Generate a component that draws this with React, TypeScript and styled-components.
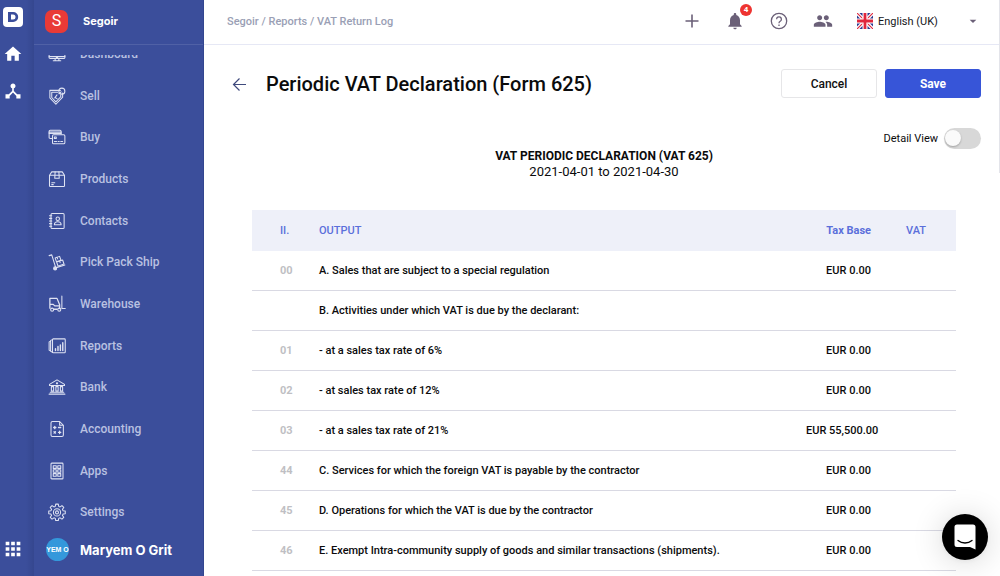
import React from "react";
import styled, { createGlobalStyle } from "styled-components";
import {
  MdApps,
  MdArrowDropDown,
  MdDeviceHub,
  MdHome,
  MdNotifications,
  MdPeople,
} from "react-icons/md";

const GlobalStyle = createGlobalStyle`
  *, *::before, *::after { box-sizing: border-box; }
  body {
    margin: 0;
    background: #fff;
    color: #0b0b0c;
    font-family: Roboto, "Liberation Sans", sans-serif;
  }
  button, select { font-family: inherit; }
  a { color: inherit; text-decoration: none; }
`;

const Shell = styled.div`
  display: flex;
  height: 100vh;
  overflow: hidden;
`;

/* Narrow product rail */
const Rail = styled.aside`
  flex: 0 0 34px;
  display: flex;
  flex-direction: column;
  align-items: center;
  gap: 17px;
  padding: 7px 8px 16px 0;
  background: linear-gradient(to right, #3b4e9b 26px, #35478f);
  color: #fff;
`;

const RailLink = styled.a<{ $last?: boolean }>`
  display: flex;
  margin-top: ${(p) => (p.$last ? "auto" : "0")};
`;

/* Main navigation */
const Sidebar = styled.aside`
  flex: 0 0 170px;
  display: flex;
  flex-direction: column;
  background: #3b4e9b;
  border-right: 1px solid #33468f;
  color: #fff;
`;

const Brand = styled.div`
  flex: 0 0 45px;
  display: flex;
  align-items: center;
  gap: 15px;
  padding: 0 11px 2px;
  border-bottom: 1px solid #5061a6;
  font: 700 11px/16px Inter, sans-serif;
`;

const BrandMark = styled.span`
  display: grid;
  place-items: center;
  width: 23px;
  height: 23px;
  border-radius: 7px;
  background: #e93a36;
  font: 400 16px/20px Roboto, sans-serif;
`;

const NavViewport = styled.nav`
  flex: 1;
  min-height: 0;
  display: flex;
  margin-top: 10px;
  overflow: hidden;
`;

const NavList = styled.ul`
  flex: 1;
  display: flex;
  flex-direction: column;
  margin: -22px 0 0;
  padding: 0;
  list-style: none;
`;

const NavItem = styled.li`
  flex: 1;
  display: flex;
`;

const NavLink = styled.a`
  display: flex;
  align-items: center;
  gap: 14px;
  padding-left: 14px;
  color: #b9c1e1;
  font-size: 12px;
  font-weight: 500;
`;

const NavGlyph = styled.svg`
  width: 18px;
  height: 18px;
  fill: none;
  stroke: #dfe3f3;
  stroke-width: 1.4;
  stroke-linecap: round;
  stroke-linejoin: round;
`;

const Profile = styled.a`
  flex: 0 0 43px;
  display: flex;
  align-items: center;
  gap: 11px;
  padding: 0 12px 10px;
  font: 700 13px/16px Inter, sans-serif;
  white-space: nowrap;
`;

const Avatar = styled.span`
  display: flex;
  justify-content: center;
  align-items: center;
  width: 23px;
  height: 23px;
  border-radius: 50%;
  overflow: hidden;
  background: #3498db;
  font: 700 7px/10px "Liberation Sans", sans-serif;
  white-space: nowrap;
`;

/* Content */
const Content = styled.div`
  flex: 1;
  min-width: 0;
  display: flex;
  flex-direction: column;
`;

const TopBar = styled.header`
  flex: 0 0 45px;
  display: flex;
  align-items: center;
  justify-content: space-between;
  padding: 0 19px 2px 23px;
  border-bottom: 1px solid #e6e8f5;
`;

const Crumbs = styled.nav`
  color: #9a9fb5;
  font-size: 11px;
  font-weight: 500;
`;

const Tools = styled.div`
  display: flex;
  align-items: center;
  gap: 24px;
  color: #6b6078;
`;

const IconButton = styled.button`
  position: relative;
  display: flex;
  padding: 0;
  border: 0;
  background: none;
  color: inherit;
  cursor: pointer;
`;

const Badge = styled.span`
  position: absolute;
  top: -7px;
  right: -7px;
  width: 12px;
  height: 12px;
  border-radius: 50%;
  background: #ee3431;
  color: #fff;
  font-size: 8px;
  font-weight: 700;
  line-height: 12px;
  text-align: center;
`;

const Language = styled.label`
  display: flex;
  align-items: center;
  gap: 5px;
`;

const LanguageSelect = styled.select`
  width: 82px;
  padding: 0;
  border: 0;
  appearance: none;
  background: none;
  color: #16161a;
  font-size: 11px;
`;

const Page = styled.main`
  flex: 1;
  min-height: 0;
  overflow: hidden;
`;

const TitleRow = styled.div`
  display: flex;
  align-items: center;
  gap: 18px;
  padding: 24px 19px 0 27px;
`;

const Title = styled.h1`
  flex: 1;
  margin: 0;
  font-size: 20px;
  font-weight: 500;
  line-height: 28px;
`;

const Actions = styled.div`
  display: flex;
  gap: 8px;
`;

const Action = styled.button<{ $primary?: boolean }>`
  width: 96px;
  height: 29px;
  padding: 0;
  border: 1px solid ${(p) => (p.$primary ? "#3755d8" : "#e6e6e8")};
  border-radius: 3px;
  background: ${(p) => (p.$primary ? "#3755d8" : "#fff")};
  color: ${(p) => (p.$primary ? "#fff" : "#111")};
  font-size: 12px;
  font-weight: ${(p) => (p.$primary ? 700 : 500)};
`;

const DetailToggle = styled.label`
  display: flex;
  justify-content: flex-end;
  align-items: center;
  gap: 6px;
  padding: 30px 19px 0;
  font-size: 11px;
`;

const Switch = styled.input`
  appearance: none;
  width: 37px;
  height: 21px;
  margin: 0;
  padding: 2px 1px;
  border-radius: 11px;
  background: #d8d8d8;

  &::before {
    content: "";
    display: block;
    width: 16px;
    height: 16px;
    border-radius: 50%;
    background: #fafafa;
    box-shadow: 0 1px 2px rgba(0, 0, 0, 0.25);
  }
  &:checked { background: #3755d8; }
  &:checked::before { margin-left: auto; }
`;

const Report = styled.section`
  padding: 0 44px 0 48px;
`;

const ReportHead = styled.div`
  padding-bottom: 29px;
  font-size: 13px;
  line-height: 18px;
  text-align: center;
`;

const ReportTitle = styled.h2`
  margin: 0;
  font-size: 12px;
  font-weight: 700;
  line-height: 14px;
`;

const Table = styled.table`
  width: 100%;
  border-spacing: 0;
  table-layout: fixed;
  font-size: 11px;
  font-weight: 500;
  text-align: left;
`;

const CodeCol = styled.col`
  width: 67px;
`;
const AmountCol = styled.col`
  width: 100px;
`;
const VatCol = styled.col`
  width: 50px;
`;

const HeadCell = styled.th<{ $code?: boolean; $amount?: boolean }>`
  height: 41px;
  padding: 0;
  padding-left: ${(p) => (p.$code ? "28px" : "0")};
  padding-right: ${(p) => (p.$amount ? "35px" : "0")};
  background: #eef0f9;
  color: #5b6fdb;
  font-weight: ${(p) => (p.$amount ? 700 : 500)};
  text-align: ${(p) => (p.$amount ? "right" : "left")};
  white-space: nowrap;
`;

const Cell = styled.td`
  height: 40px;
  padding: 0;
  border-bottom: 1px solid #d9d9e3;
  white-space: nowrap;
`;

const CodeCell = styled(Cell)`
  padding-left: 28px;
  color: #bfbfc4;
  font-weight: 700;
`;

const AmountCell = styled(Cell)<{ $filled: boolean }>`
  padding-right: ${(p) => (p.$filled ? "28px" : "35px")};
  text-align: right;
`;

const ChatButton = styled.button`
  position: fixed;
  right: 12px;
  bottom: 16px;
  display: grid;
  place-items: center;
  width: 46px;
  height: 46px;
  padding: 0;
  border: 0;
  border-radius: 50%;
  background: #000;
  box-shadow: 0 1px 6px rgba(0, 0, 0, 0.06), 0 2px 32px rgba(0, 0, 0, 0.16);
`;

const ScrollThumb = styled.div`
  position: fixed;
  top: 0;
  right: 0;
  width: 1px;
  height: 30vh;
  background: #e3e4ea;
`;

const NAV: { label: string; art: React.ReactNode }[] = [
  {
    label: "Dashboard",
    art: (
      <>
        <path d="M1.5 5h21v11.500a1.500 1.500 0 0 1-1.500 1.500H3a1.500 1.500 0 0 1-1.500-1.500z" />
        <path d="M1.500 15.500h21M9.500 18v3M14.500 18v3M7 21h10M11 17h2" />
      </>
    ),
  },
  {
    label: "Sell",
    art: (
      <>
        <path d="M2.500 4.500h14M2.500 4.500v10l8 8.500 9-9.500V8" />
        <path d="M5 7h8M5 7v7l5.500 5.800L17 13v-2.500" />
        <circle cx="18.500" cy="5.500" r="4" />
        <path d="m9.500 14 2.500 1.500M12 10.500l-3 4M14.500 9l3-2.500" />
      </>
    ),
  },
  {
    label: "Buy",
    art: (
      <>
        <path d="M5 14H3a1.500 1.500 0 0 1-1.500-1.500V4.500A1.500 1.500 0 0 1 3 3h13a1.500 1.500 0 0 1 1.500 1.500V8" />
        <path d="M1.500 5.500h16M1.500 7.200h16" />
        <rect x="6" y="9" width="16.500" height="12" rx="1.500" />
        <path d="M8.500 12h2.500v2H8.500zM8.500 18h3M13.500 18h1.500M17 18h2.500" />
      </>
    ),
  },
  {
    label: "Products",
    art: (
      <>
        <path d="M2 7v14a1 1 0 0 0 1 1h18a1 1 0 0 0 1-1V7l-3-4.500H5zM2 7h20" />
        <path d="M9.500 2.500 9 11h6l-.5-8.500M5 17h4M5 19.500h2" />
      </>
    ),
  },
  {
    label: "Contacts",
    art: (
      <>
        <rect x="4" y="2" width="17.500" height="20" rx="1.500" />
        <path d="M2 5h3M2 8.500h3M2 12h3M2 15.500h3M2 19h3" />
        <circle cx="13" cy="9" r="2.300" />
        <path d="M8.500 17c0-3 1.500-4 4.500-4s4.500 1 4.500 4z" />
      </>
    ),
  },
  {
    label: "Pick Pack Ship",
    art: (
      <>
        <path d="M1.500 3.500 5 2.500l5 16M11 19.500l11.500-3.500" />
        <circle cx="9.500" cy="20.500" r="2" fill="#dfe3f3" />
        <path d="m9.500 6.500 6-2 1.700 5-6 2zM11.500 12l8-2.700 1.900 5.500-8 2.700zM12 5.800l.8 2M15.500 10.800l.7 2" />
      </>
    ),
  },
  {
    label: "Warehouse",
    art: (
      <>
        <path d="M18.500 1.500v16.500H23" />
        <path d="M2.500 17.500V4.500H12l3.500 8.500v5M2.500 12.500h4.500l2 2h6.500M8 19h4" strokeWidth="1.700" />
        <circle cx="5.500" cy="19.500" r="2" />
        <circle cx="15" cy="19.500" r="2" />
      </>
    ),
  },
  {
    label: "Reports",
    art: (
      <>
        <rect x="6" y="2.500" width="17" height="18.500" rx="1" />
        <path d="M6 3.500 3.500 4.500v14.500L6 20.500M3.500 5.500 1.500 6.500v11l2 1.200" />
        <path d="M10 18v-2.500M13.300 18v-5.500M16.500 18v-7.500M19.700 18V7.500" strokeWidth="1.900" />
      </>
    ),
  },
  {
    label: "Bank",
    art: (
      <>
        <path d="M2 8.500 12 2.500l10 6v1.500H2zM1.500 21.500h21M3 19h18" />
        <path d="M4.500 11.500h3v6h-3zM10.500 11.500h3v6h-3zM16.500 11.500h3v6h-3z" />
        <circle cx="12" cy="7" r=".8" />
      </>
    ),
  },
  {
    label: "Accounting",
    art: (
      <>
        <path d="M15.500 2H6a2 2 0 0 0-2 2v16a2 2 0 0 0 2 2h12.500a2 2 0 0 0 2-2V7zM15.500 2v5h5" />
        <path d="M7.500 10h3M9 8.500v3M14 10h3M8 15.500l2 2M10 15.500l-2 2M14 16.500h3M15.500 15v3" strokeWidth="1.700" />
      </>
    ),
  },
  {
    label: "Apps",
    art: (
      <>
        <rect x="4" y="1.500" width="16" height="21" rx="1" />
        <path d="M7 5h4v3.500H7zM13 5h4v3.500h-4zM7 10.200h4v3.500H7zM13 10.200h4v3.500h-4zM7 15.500h4V19H7zM13 15.500h4V19h-4z" />
      </>
    ),
  },
  {
    label: "Settings",
    art: (
      <>
        <path d="M10.300 1.500h3.400l.6 3 1.800.7 2.500-1.700 2.400 2.400-1.700 2.500.7 1.800 3 .6v3.400l-3 .6-.7 1.800 1.700 2.500-2.400 2.400-2.500-1.700-1.800.7-.6 3h-3.400l-.6-3-1.800-.7-2.500 1.700-2.400-2.400 1.700-2.500-.7-1.800-3-.6v-3.400l3-.6.7-1.800L3 5.900l2.400-2.400 2.500 1.700 1.800-.7z" />
        <circle cx="12" cy="12.500" r="4.800" />
        <circle cx="12" cy="12.500" r="2" />
      </>
    ),
  },
];

const ROWS: { code: string; text: string; base: string }[] = [
  { code: "00", text: "A. Sales that are subject to a special regulation", base: "EUR 0.00" },
  { code: "", text: "B. Activities under which VAT is due by the declarant:", base: "" },
  { code: "01", text: "- at a sales tax rate of 6%", base: "EUR 0.00" },
  { code: "02", text: "- at sales tax rate of 12%", base: "EUR 0.00" },
  { code: "03", text: "- at a sales tax rate of 21%", base: "EUR 55,500.00" },
  { code: "44", text: "C. Services for which the foreign VAT is payable by the contractor", base: "EUR 0.00" },
  { code: "45", text: "D. Operations for which the VAT is due by the contractor", base: "EUR 0.00" },
  { code: "46", text: "E. Exempt Intra-community supply of goods and similar transactions (shipments).", base: "EUR 0.00" },
];

const Logo = () => (
  <svg width="20" height="20" viewBox="0 0 20 20" aria-hidden="true">
    <rect width="20" height="20" rx="4" fill="#fff" />
    <path
      d="M5 5h5.200a5 5 0 0 1 0 10H5zM8 7.500v5h2a2.500 2.500 0 0 0 0-5z"
      fill="#3b4e9b"
      fillRule="evenodd"
    />
  </svg>
);

const UkFlag = () => (
  <svg width="16" height="16" viewBox="0 0 16 16" aria-hidden="true">
    <rect width="16" height="16" fill="#2b3990" />
    <path d="M0 0l16 16M16 0 0 16" stroke="#fff" strokeWidth="3.400" />
    <path d="M0 0l16 16M16 0 0 16" stroke="#e0263c" strokeWidth="1.100" />
    <path d="M8 0v16M0 8h16" stroke="#fff" strokeWidth="5" />
    <path d="M8 0v16M0 8h16" stroke="#e0263c" strokeWidth="2.800" />
  </svg>
);

export default function App() {
  return (
    <Shell>
      <GlobalStyle />
      <Rail>
        <RailLink href="#" aria-label="Deskera">
          <Logo />
        </RailLink>
        <RailLink href="#" aria-label="Home">
          <MdHome size={20} />
        </RailLink>
        <RailLink href="#" aria-label="Integrations">
          <MdDeviceHub size={20} />
        </RailLink>
        <RailLink href="#" aria-label="All products" $last>
          <MdApps size={22} />
        </RailLink>
      </Rail>

      <Sidebar>
        <Brand>
          <BrandMark>S</BrandMark>
          Segoir
        </Brand>
        <NavViewport aria-label="Main">
          <NavList>
            {NAV.map((item) => (
              <NavItem key={item.label}>
                <NavLink href="#">
                  <NavGlyph viewBox="0 0 24 24" aria-hidden="true">
                    {item.art}
                  </NavGlyph>
                  {item.label}
                </NavLink>
              </NavItem>
            ))}
          </NavList>
        </NavViewport>
        <Profile href="#">
          <Avatar aria-hidden="true">YEM O</Avatar>
          Maryem O Grit
        </Profile>
      </Sidebar>

      <Content>
        <TopBar>
          <Crumbs aria-label="Breadcrumb">
            <a href="#">Segoir</a> / <a href="#">Reports</a> / <a href="#">VAT Return Log</a>
          </Crumbs>
          <Tools>
            <IconButton aria-label="Add">
              <svg width="18" height="18" viewBox="0 0 18 18" stroke="currentColor" strokeWidth="1.600">
                <path d="M9 2.500v13M2.500 9h13" />
              </svg>
            </IconButton>
            <IconButton aria-label="Notifications">
              <MdNotifications size={20} />
              <Badge>4</Badge>
            </IconButton>
            <IconButton aria-label="Help">
              <svg
                width="20"
                height="20"
                viewBox="0 0 20 20"
                fill="none"
                stroke="currentColor"
                strokeWidth="1.300"
              >
                <circle cx="10" cy="10" r="7.700" />
                <path d="M7.600 8.200a2.400 2.400 0 1 1 3.600 2.100c-.8.500-1.200.9-1.200 1.900M10 13.400v1.500" />
              </svg>
            </IconButton>
            <IconButton aria-label="Users">
              <MdPeople size={20} />
            </IconButton>
            <Language>
              <UkFlag />
              <LanguageSelect aria-label="Language" defaultValue="en-GB">
                <option value="en-GB">English (UK)</option>
              </LanguageSelect>
              <MdArrowDropDown size={16} />
            </Language>
          </Tools>
        </TopBar>

        <Page>
          <TitleRow>
            <IconButton aria-label="Back">
              <svg width="17" height="17" viewBox="0 0 17 17" fill="none" stroke="#3f4a7d" strokeWidth="1.200">
                <path d="M15 9.500H2.500M8.500 3.500l-6 6 6 6" />
              </svg>
            </IconButton>
            <Title>Periodic VAT Declaration (Form 625)</Title>
            <Actions>
              <Action type="button">Cancel</Action>
              <Action type="button" $primary>
                Save
              </Action>
            </Actions>
          </TitleRow>
          <DetailToggle>
            Detail View
            <Switch type="checkbox" role="switch" />
          </DetailToggle>

          <Report>
            <ReportHead>
              <ReportTitle>VAT PERIODIC DECLARATION (VAT 625)</ReportTitle>
              2021-04-01 to 2021-04-30
            </ReportHead>
            <Table>
              <colgroup>
                <CodeCol />
                <col />
                <AmountCol />
                <VatCol />
              </colgroup>
              <thead>
                <tr>
                  <HeadCell $code>II.</HeadCell>
                  <HeadCell>OUTPUT</HeadCell>
                  <HeadCell $amount>Tax Base</HeadCell>
                  <HeadCell>VAT</HeadCell>
                </tr>
              </thead>
              <tbody>
                {ROWS.map((row) => (
                  <tr key={row.text}>
                    <CodeCell>{row.code}</CodeCell>
                    <Cell>{row.text}</Cell>
                    <AmountCell $filled={row.base !== "EUR 0.00"}>{row.base}</AmountCell>
                    <Cell />
                  </tr>
                ))}
              </tbody>
            </Table>
          </Report>
        </Page>
      </Content>

      <ScrollThumb />
      <ChatButton aria-label="Open chat">
        <svg width="22" height="26" viewBox="0 0 22 26" aria-hidden="true">
          <path d="M3 .500h16a2.500 2.500 0 0 1 2.500 2.500v22.500L16 23H3A2.500 2.500 0 0 1 .500 20.500V3A2.500 2.500 0 0 1 3 .500z" fill="#fff" />
          <path d="M4 16.500c4 3.300 10 3.300 14 0" fill="none" stroke="#000" strokeWidth="1.300" strokeLinecap="round" />
        </svg>
      </ChatButton>
    </Shell>
  );
}
